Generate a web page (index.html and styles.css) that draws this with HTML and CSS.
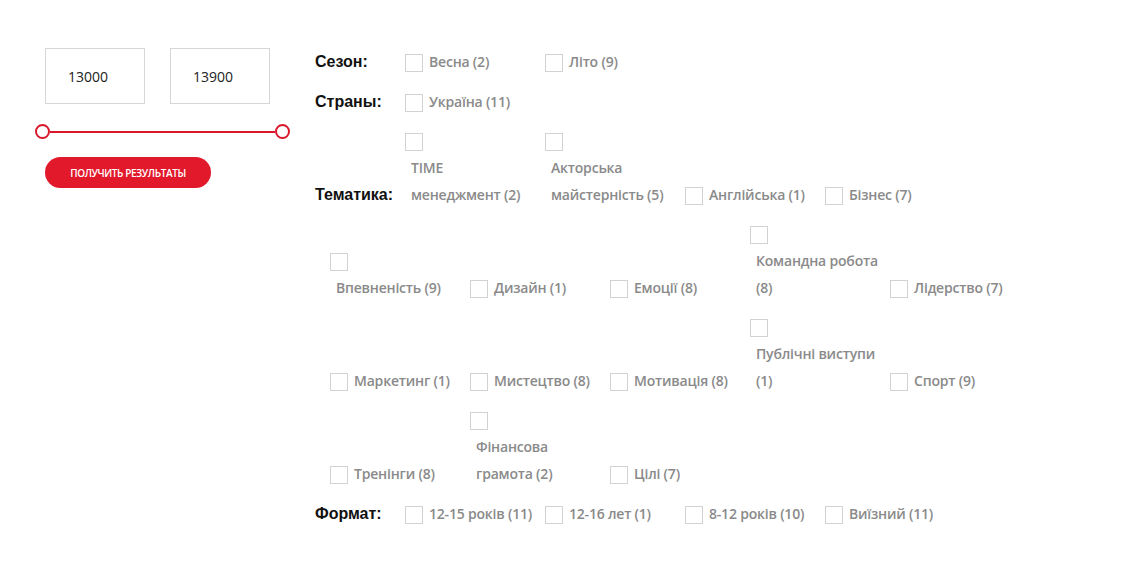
FILE: index.html
```html
<!DOCTYPE html>
<html lang="uk">
<head>
  <meta charset="UTF-8" />
  <meta name="viewport" content="width=device-width, initial-scale=1.0"/>
  <title>Фільтр</title>
  <link rel="stylesheet" href="styles.css">
</head>
<body>
  <div class="page">

    <!-- Price filter -->
    <div class="price">
      <div class="price-inputs">
        <input type="text" class="price-input" value="13000" />
        <input type="text" class="price-input" value="13900" />
      </div>
      <div class="range">
        <span class="handle"></span>
        <span class="track"></span>
        <span class="handle"></span>
      </div>
      <button class="btn" type="button">Получить результаты</button>
    </div>

    <!-- Checkbox filters -->
    <div class="filters">
      <div class="group">
        <span class="group-title">Сезон:</span>
        <label class="item"><span class="box"></span><span class="name">Весна (2)</span></label>
        <label class="item"><span class="box"></span><span class="name">Літо (9)</span></label>
      </div>

      <div class="group">
        <span class="group-title">Страны:</span>
        <label class="item"><span class="box"></span><span class="name">Україна (11)</span></label>
      </div>

      <div class="group">
        <span class="group-title">Тематика:</span>
        <label class="item stack"><span class="box"></span><span class="name">TIME<br>менеджмент (2)</span></label>
        <label class="item stack"><span class="box"></span><span class="name">Акторська<br>майстерність (5)</span></label>
        <label class="item"><span class="box"></span><span class="name">Англійська (1)</span></label>
        <label class="item"><span class="box"></span><span class="name">Бізнес (7)</span></label>
        <label class="item stack"><span class="box"></span><span class="name">Впевненість (9)</span></label>
        <label class="item"><span class="box"></span><span class="name">Дизайн (1)</span></label>
        <label class="item"><span class="box"></span><span class="name">Емоції (8)</span></label>
        <label class="item stack"><span class="box"></span><span class="name">Командна робота<br>(8)</span></label>
        <label class="item"><span class="box"></span><span class="name">Лідерство (7)</span></label>
        <label class="item"><span class="box"></span><span class="name">Маркетинг (1)</span></label>
        <label class="item"><span class="box"></span><span class="name">Мистецтво (8)</span></label>
        <label class="item"><span class="box"></span><span class="name">Мотивація (8)</span></label>
        <label class="item stack"><span class="box"></span><span class="name">Публічні виступи<br>(1)</span></label>
        <label class="item"><span class="box"></span><span class="name">Спорт (9)</span></label>
        <label class="item"><span class="box"></span><span class="name">Тренінги (8)</span></label>
        <label class="item stack"><span class="box"></span><span class="name">Фінансова<br>грамота (2)</span></label>
        <label class="item"><span class="box"></span><span class="name">Цілі (7)</span></label>
      </div>

      <div class="group">
        <span class="group-title">Формат:</span>
        <label class="item"><span class="box"></span><span class="name">12-15 років (11)</span></label>
        <label class="item"><span class="box"></span><span class="name">12-16 лет (1)</span></label>
        <label class="item"><span class="box"></span><span class="name">8-12 років (10)</span></label>
        <label class="item"><span class="box"></span><span class="name">Виїзний (11)</span></label>
      </div>
    </div>

  </div>
</body>
</html>
```

FILE: styles.css
```css
body {
  margin: 0;
  background: #fff;
  font-family: "Open Sans", Arial, sans-serif;
}
.page {
  display: flex;
  padding-top: 48px;
}

/* left column */
.price {
  width: 315px;
  padding-left: 45px;
  box-sizing: border-box;
}
.price-inputs {
  display: flex;
  gap: 25px;
}
.price-input {
  width: 100px;
  height: 56px;
  box-sizing: border-box;
  border: 1px solid #d6d6d6;
  padding: 0 0 0 22px;
  font-family: "Open Sans", Arial, sans-serif;
  font-size: 14px;
  color: #222;
  outline: none;
}
.range {
  display: flex;
  align-items: center;
  width: 255px;
  margin: 20px 0 0 -10px;
}
.handle {
  width: 15px;
  height: 15px;
  box-sizing: border-box;
  border: 2px solid #d9192b;
  border-radius: 50%;
  background: #fff;
}
.track {
  flex: 1;
  height: 2px;
  background: #d9192b;
}
.btn {
  display: block;
  width: 166px;
  height: 31px;
  margin-top: 18px;
  border: none;
  border-radius: 16px;
  background: #e2192b;
  color: #fff;
  font-family: "Open Sans", Arial, sans-serif;
  font-size: 10px;
  font-weight: 600;
  letter-spacing: -0.4px;
  text-transform: uppercase;
  cursor: pointer;
}

/* filters */
.filters {
  width: 740px;
}
.group {
  font-size: 0;
  line-height: 27px;
}
.group:first-child {
  margin-bottom: 1px;
}
.group:last-child {
  margin-top: 1px;
}
.group-title {
  display: inline-block;
  width: 75px;
  margin-bottom: 12px;
  white-space: nowrap;
  font-family: "Liberation Sans", Arial, sans-serif;
  font-size: 16px;
  font-weight: bold;
  color: #111;
}
.item {
  display: inline-block;
  width: 125px;
  margin: 0 0 12px 15px;
  vertical-align: baseline;
  white-space: nowrap;
  font-size: 14px;
  font-weight: 600;
  letter-spacing: -0.2px;
  color: #8a8a8a;
  cursor: pointer;
}
.box {
  display: inline-block;
  width: 18px;
  height: 18px;
  box-sizing: border-box;
  border: 1px solid #d2d2d2;
  background: #fff;
  vertical-align: middle;
}
.name {
  display: inline-block;
  padding-left: 6px;
  vertical-align: baseline;
}
.item.stack .name {
  display: block;
}
```
